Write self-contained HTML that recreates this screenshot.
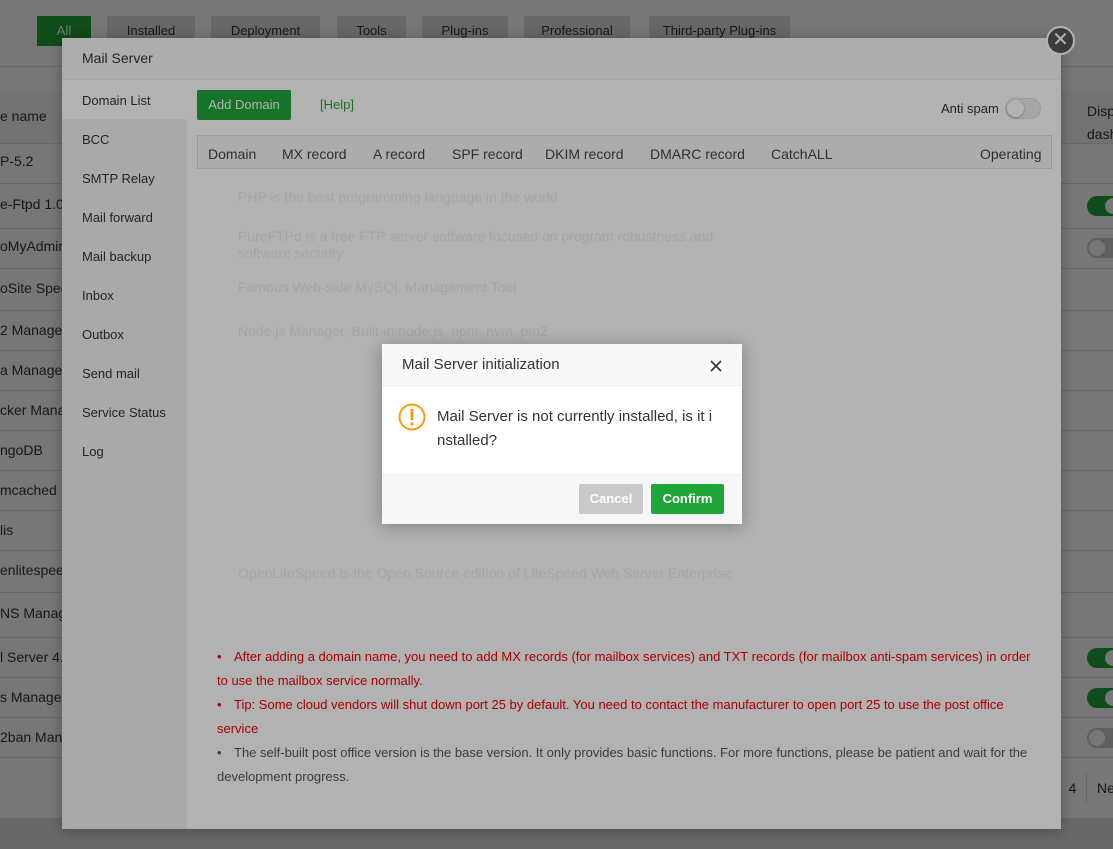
<!DOCTYPE html>
<html><head><meta charset="utf-8"><style>
*{margin:0;padding:0;box-sizing:border-box}
body{width:1113px;height:849px;overflow:hidden;position:relative;font-family:"Liberation Sans",sans-serif;font-size:13px;color:#333;background:#f0f0f0}
.a{position:absolute;white-space:nowrap}
.tab{position:absolute;top:16px;height:30px;background:#ddd;line-height:30px;text-align:center;font-size:13px;color:#333}
.ov{position:absolute;left:0;top:0;width:1113px;height:849px}
.row{position:absolute;left:0;width:1113px;border-bottom:1px solid #ddd}
.nm{position:absolute;left:0;font-size:14px;color:#333}
.sw{position:absolute;left:1087px;width:36px;height:20px;border-radius:10px}
.sw i{position:absolute;top:2px;width:16px;height:16px;border-radius:50%;background:#fff}
.side{position:absolute;left:20px;font-size:13px;color:#333}
.th{position:absolute;top:10px;font-size:14px;color:#444}
.ghost{position:absolute;color:#ececec;font-size:14px;white-space:nowrap}
.note{position:absolute;left:155px;font-size:13px;line-height:24px;width:820px;white-space:normal}
.note b{font-weight:normal;display:inline-block;width:17px}
</style></head><body>
<div class="a" style="left:0;top:0;width:1113px;height:818px;background:#fff"></div>
<div class="tab" style="left:37px;width:54px;background:#20a53a;color:#fff">All</div>
<div class="tab" style="left:107px;width:88px">Installed</div>
<div class="tab" style="left:211px;width:109px">Deployment</div>
<div class="tab" style="left:337px;width:69px">Tools</div>
<div class="tab" style="left:422px;width:86px">Plug-ins</div>
<div class="tab" style="left:524px;width:106px">Professional</div>
<div class="tab" style="left:649px;width:141px">Third-party Plug-ins</div>
<div class="row" style="top:66px;height:1px"></div>
<div class="row" style="top:92px;height:52px;background:#f6f6f6"><span class="nm" style="top:16px">e name</span><span class="a" style="left:1087px;top:8px;font-size:14px;line-height:23px">Disp<br>dash</span></div>
<div class="row" style="top:143px;height:41px"><span class="nm" style="top:10px">P-5.2</span></div>
<div class="row" style="top:184px;height:45px"><span class="nm" style="top:12px">e-Ftpd 1.0.49</span><div class="sw" style="top:12px;background:#20a53a"><i style="left:18px"></i></div></div>
<div class="row" style="top:229px;height:40px"><span class="nm" style="top:9px">oMyAdmin 5.0</span><div class="sw" style="top:9px;background:#ccc"><i style="left:2px"></i></div></div>
<div class="row" style="top:269px;height:42px"><span class="nm" style="top:11px">oSite Speed</span></div>
<div class="row" style="top:311px;height:40px"><span class="nm" style="top:11px">2 Manager</span></div>
<div class="row" style="top:351px;height:40px"><span class="nm" style="top:11px">a Manager</span></div>
<div class="row" style="top:391px;height:40px"><span class="nm" style="top:11px">cker Manager</span></div>
<div class="row" style="top:431px;height:40px"><span class="nm" style="top:11px">ngoDB</span></div>
<div class="row" style="top:471px;height:40px"><span class="nm" style="top:11px">mcached</span></div>
<div class="row" style="top:511px;height:40px"><span class="nm" style="top:11px">lis</span></div>
<div class="row" style="top:551px;height:42px"><span class="nm" style="top:11px">enlitespeed</span></div>
<div class="row" style="top:593px;height:45px"><span class="nm" style="top:12px">NS Manager</span></div>
<div class="row" style="top:638px;height:40px"><span class="nm" style="top:11px">l Server 4.1</span><div class="sw" style="top:10px;background:#20a53a"><i style="left:18px"></i></div></div>
<div class="row" style="top:678px;height:40px"><span class="nm" style="top:11px">s Manager 3.3</span><div class="sw" style="top:10px;background:#20a53a"><i style="left:18px"></i></div></div>
<div class="row" style="top:718px;height:40px"><span class="nm" style="top:11px">2ban Manager 1.7</span><div class="sw" style="top:10px;background:#ccc"><i style="left:2px"></i></div></div>
<div class="a" style="left:1058px;top:773px;width:28px;height:30px;border-left:1px solid #ddd;line-height:30px;text-align:center;font-size:14px">4</div>
<div class="a" style="left:1086px;top:773px;width:30px;height:30px;border-left:1px solid #ddd;line-height:30px;padding-left:10px;font-size:14px">Ne</div>
<div class="a" style="left:0;top:818px;width:1113px;height:31px;background:#e0e0e0"></div>
<div class="ov" style="background:rgba(0,0,0,0.33)"></div>

<div class="a" style="left:62px;top:38px;width:999px;height:791px;background:#fff;box-shadow:0 2px 12px rgba(0,0,0,.3)">
  <div class="a" style="left:0;top:0;width:999px;height:42px;border-bottom:1px solid #eee;background:#f8f8f8"><span class="a" style="left:20px;top:12px;font-size:14px">Mail Server</span></div>
  <div class="a" style="left:0;top:42px;width:125px;height:749px;background:#f2f2f2"></div>
  <div class="a" style="left:0;top:42px;width:125px;height:39px;background:#fff"></div>
  <span class="side" style="top:55px">Domain List</span>
  <span class="side" style="top:94px">BCC</span>
  <span class="side" style="top:133px">SMTP Relay</span>
  <span class="side" style="top:172px">Mail forward</span>
  <span class="side" style="top:211px">Mail backup</span>
  <span class="side" style="top:250px">Inbox</span>
  <span class="side" style="top:289px">Outbox</span>
  <span class="side" style="top:328px">Send mail</span>
  <span class="side" style="top:367px">Service Status</span>
  <span class="side" style="top:406px">Log</span>
  <div class="a" style="left:135px;top:52px;width:94px;height:30px;background:#20a53a;border-radius:2px;color:#fff;line-height:30px;text-align:center;font-size:13px">Add Domain</div>
  <span class="a" style="left:258px;top:59px;color:#20a53a;font-size:13px">[Help]</span>
  <span class="a" style="left:879px;top:63px;font-size:13px">Anti spam</span>
  <div class="a" style="left:943px;top:60px;width:36px;height:21px;border-radius:11px;background:#eee;border:1px solid #ddd"><i style="position:absolute;left:1px;top:1px;width:17px;height:17px;border-radius:50%;background:#fff;box-shadow:0 1px 2px rgba(0,0,0,.3)"></i></div>
  <div class="a" style="left:135px;top:97px;width:855px;height:34px;background:#f6f6f6;border:1px solid #ddd">
    <span class="th" style="left:10px">Domain</span><span class="th" style="left:84px">MX record</span><span class="th" style="left:175px">A record</span><span class="th" style="left:254px">SPF record</span><span class="th" style="left:347px">DKIM record</span><span class="th" style="left:452px">DMARC record</span><span class="th" style="left:573px">CatchALL</span><span class="th" style="left:782px">Operating</span>
  </div>
  <span class="ghost" style="left:176px;top:151px">PHP is the best programming language in the world</span>
  <span class="ghost" style="left:176px;top:190px">PureFTPd is a free FTP server software focused on program robustness and</span>
  <span class="ghost" style="left:176px;top:202px;top:207px">software security.</span>
  <span class="ghost" style="left:176px;top:241px">Famous Web-side MySQL Management Tool</span>
  <span class="ghost" style="left:176px;top:285px">Node.js Manager, Built-in node.js, npm, nvm, pm2</span>
  <span class="ghost" style="left:176px;top:527px">OpenLiteSpeed is the Open Source edition of LiteSpeed Web Server Enterprise</span>
  <div class="note" style="top:607px;color:#e00"><b>•</b>After adding a domain name, you need to add MX records (for mailbox services) and TXT records (for mailbox anti-spam services) in order to use the mailbox service normally.</div>
  <div class="note" style="top:655px;color:#e00"><b>•</b>Tip: Some cloud vendors will shut down port 25 by default. You need to contact the manufacturer to open port 25 to use the post office service</div>
  <div class="note" style="top:703px;color:#555"><b>•</b>The self-built post office version is the base version. It only provides basic functions. For more functions, please be patient and wait for the development progress.</div>
</div>
<div class="a" style="left:1046px;top:26px;width:29px;height:29px;border-radius:50%;background:#555;border:2px solid #fff;color:#fff;text-align:center;line-height:24px;font-size:20px">✕</div>
<div class="ov" style="background:rgba(0,0,0,0.3)"></div>

<div class="a" style="left:382px;top:344px;width:360px;height:180px;background:#fff;box-shadow:0 2px 16px rgba(0,0,0,.3)">
  <div class="a" style="left:0;top:0;width:360px;height:42px;background:#f8f8f8;border-bottom:1px solid #eee"><span class="a" style="left:20px;top:12px;font-size:15px;color:#333">Mail Server initialization</span>
  <svg class="a" style="left:328px;top:16px" width="12" height="12" viewBox="0 0 12 12"><path d="M1 1L11 11M11 1L1 11" stroke="#333" stroke-width="1.6"/></svg></div>
  <svg class="a" style="left:16px;top:59px" width="28" height="28" viewBox="0 0 28 28"><circle cx="14" cy="14" r="12.5" fill="none" stroke="#f39c12" stroke-width="2"/><rect x="12.5" y="6" width="3" height="11" fill="#f39c12"/><rect x="12.5" y="19.5" width="3" height="3" fill="#f39c12"/></svg>
  <div class="a" style="left:55px;top:61px;width:283px;white-space:normal;word-break:break-all;font-size:15px;line-height:24px;color:#333">Mail Server is not currently installed, is it installed?</div>
  <div class="a" style="left:0;top:130px;width:360px;height:50px;background:#f5f6f5;border-top:1px solid #eee"></div>
  <div class="a" style="left:197px;top:140px;width:64px;height:30px;background:#c9c9c9;border-radius:2px;color:#fff;font-weight:bold;line-height:30px;text-align:center">Cancel</div>
  <div class="a" style="left:269px;top:140px;width:73px;height:30px;background:#20a53a;border-radius:2px;color:#fff;font-weight:bold;line-height:30px;text-align:center">Confirm</div>
</div>
</body></html>
